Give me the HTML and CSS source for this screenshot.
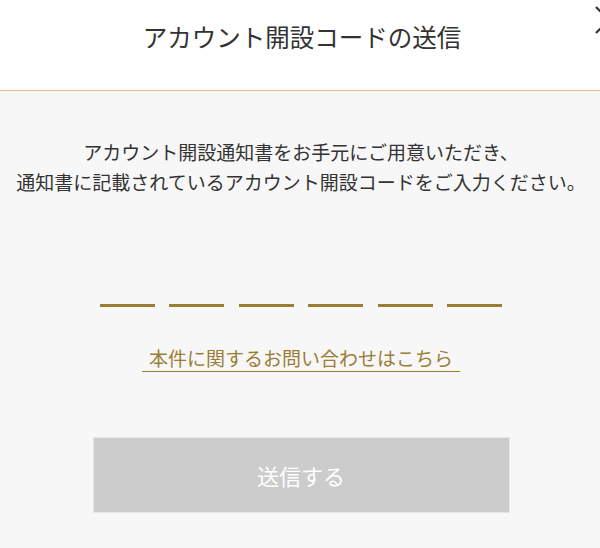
FILE: index.html
```html
<!DOCTYPE html>
<html lang="ja">
<head>
<meta charset="utf-8">
<link rel="stylesheet" href="styles.css">
</head>
<body>
<div class="page">
  <header class="header">
    <h1 class="title">アカウント開設コードの送信</h1>
    <button class="close" aria-label="閉じる">
      <svg width="28" height="28" viewBox="0 0 28 28"><path d="M1 1 L27 27 M27 1 L1 27" stroke="#333" stroke-width="2.2" fill="none"/></svg>
    </button>
  </header>
  <main class="main">
    <p class="lead">アカウント開設通知書をお手元にご用意いただき、<br>通知書に記載されているアカウント開設コードをご入力ください。</p>
    <div class="code-row">
      <span class="code-box"></span>
      <span class="code-box"></span>
      <span class="code-box"></span>
      <span class="code-box"></span>
      <span class="code-box"></span>
      <span class="code-box"></span>
    </div>
    <a class="inquiry" href="#">本件に関するお問い合わせはこちら</a>
    <button class="submit" disabled>送信する</button>
  </main>
</div>
</body>
</html>
```
FILE: styles.css
```css
* { box-sizing: border-box; }
html, body {
  margin: 0;
  padding: 0;
  background: #f7f7f7;
  font-family: "Noto Sans CJK JP", "Noto Sans", sans-serif;
  color: #333;
}
.page {
  width: 600px;
  height: 548px;
  overflow: hidden;
  position: relative;
}
.header {
  height: 91px;
  background: #fff;
  border-bottom: 1px solid #d9c18f;
  display: flex;
  justify-content: center;
  padding-top: 19px;
  padding-left: 4px;
}
.title {
  margin: 0;
  font-size: 24.5px;
  font-weight: 400;
  line-height: 36px;
  color: #333;
}
.close {
  position: absolute;
  left: 595px;
  top: 6px;
  width: 28px;
  height: 28px;
  padding: 0;
  border: 0;
  background: none;
}
.close svg { display: block; }
.main {
  display: flex;
  flex-direction: column;
  align-items: center;
  padding-top: 46px;
  padding-left: 2px;
}
.lead {
  margin: 0;
  font-size: 19px;
  line-height: 30px;
  text-align: center;
  color: #333;
}
.code-row {
  display: flex;
  gap: 14.6px;
  margin-top: 70px;
}
.code-box {
  display: block;
  width: 55px;
  height: 40px;
  border-bottom: 3px solid #9b7d35;
}
.inquiry {
  margin-top: 38px;
  padding: 0 7px;
  font-size: 19px;
  line-height: 26px;
  color: #9b7d35;
  text-decoration: none;
  border-bottom: 1.5px solid #9b7d35;
}
.submit {
  margin-top: 65px;
  width: 417px;
  height: 76px;
  background: #cccccc;
  border: 1px solid #e6e6e6;
  color: #fff;
  font-family: inherit;
  font-size: 22px;
  padding: 0;
}
```
